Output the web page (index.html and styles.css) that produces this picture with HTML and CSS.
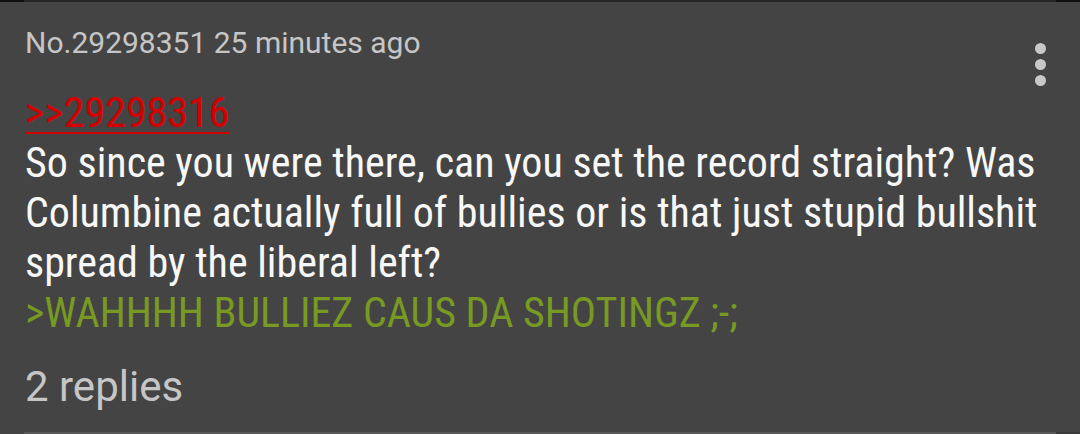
FILE: index.html
```html
<!DOCTYPE html>
<html>
<head>
<meta charset="utf-8">
<link rel="stylesheet" href="styles.css">
</head>
<body>
<div class="topbar"><span class="edge"></span><span class="mid"></span><span class="edge"></span></div>
<div class="post">
  <div class="header">No.29298351 25 minutes ago</div>
  <div class="menu"><span class="dot"></span><span class="dot"></span><span class="dot"></span></div>
  <div class="comment">
    <a class="quote" href="#">&gt;&gt;29298316</a><br>
    So since you were there, can you set the record straight? Was Columbine actually full of bullies or is that just stupid bullshit spread by the liberal left?<br>
    <span class="green">&gt;WAHHHH BULLIEZ CAUS DA SHOTINGZ ;-;</span>
  </div>
  <div class="replies">2 replies</div>
</div>
<div class="bottombar"><span class="mid"></span><span class="right"></span></div>
</body>
</html>
```
FILE: styles.css
```css
html, body {
  margin: 0;
  padding: 0;
  background: #444444;
  width: 1080px;
  height: 434px;
  overflow: hidden;
}
.topbar {
  display: flex;
  height: 2px;
}
.topbar .edge {
  width: 24px;
  background: #111111;
}
.topbar .mid {
  flex: 1;
  background: #262626;
}
.post {
  position: relative;
  padding: 25px 24px 0 25px;
}
.header {
  font-family: Roboto, "Liberation Sans", sans-serif;
  font-size: 30px;
  line-height: 32px;
  color: #c6c6c6;
}
.menu {
  position: absolute;
  top: 41px;
  left: 1035px;
  display: flex;
  flex-direction: column;
  gap: 5px;
}
.dot {
  width: 11px;
  height: 11px;
  border-radius: 50%;
  background: #c8c8c8;
}
.comment {
  margin-top: 29px;
  font-family: "Roboto Condensed", Roboto, "Liberation Sans Narrow", sans-serif;
  font-stretch: condensed;
  font-size: 42px;
  line-height: 50px;
  color: #f7f7f7;
}
.quote {
  color: #d40000;
  text-decoration: underline;
  text-decoration-thickness: 2px;
  text-underline-offset: 5px;
}
.green {
  color: #789922;
}
.replies {
  margin-top: 25px;
  font-family: Roboto, "Liberation Sans", sans-serif;
  font-size: 42px;
  line-height: 48px;
  color: #c6c6c6;
}
.bottombar {
  position: absolute;
  top: 432px;
  left: 24px;
  right: 0;
  height: 2px;
  display: flex;
}
.bottombar .mid {
  flex: 1;
  background: #575757;
}
.bottombar .right {
  width: 24px;
  background: #3a3a3a;
}
```
